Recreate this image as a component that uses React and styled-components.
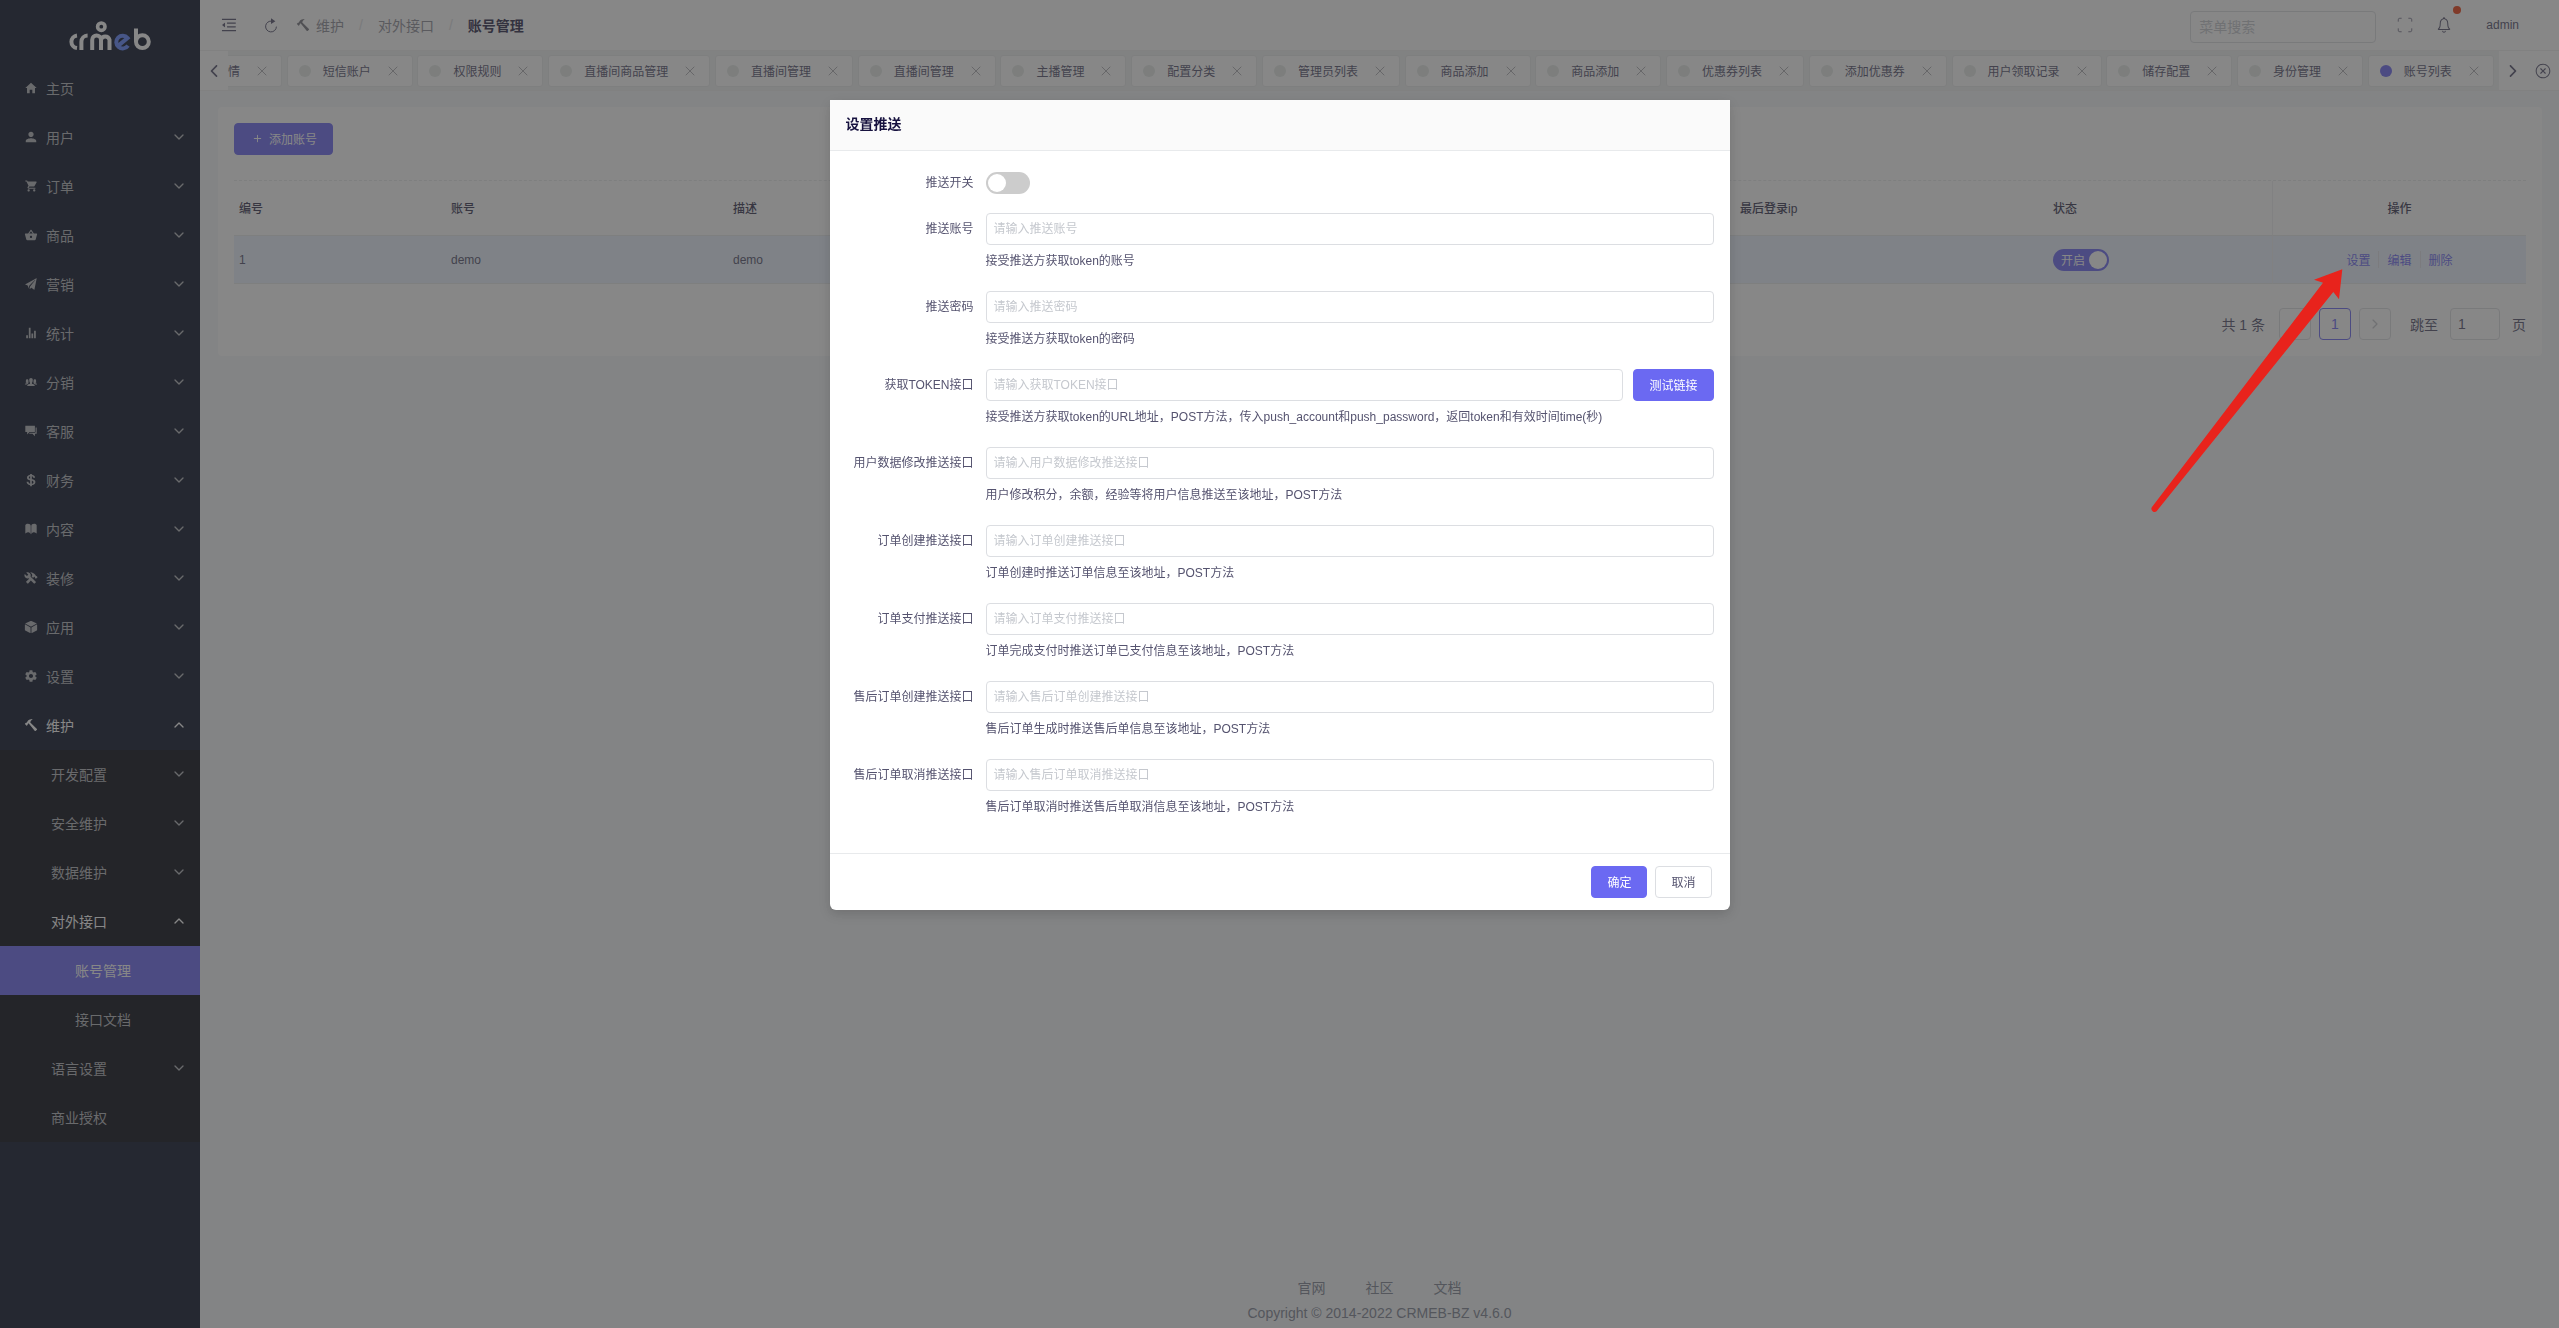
import { useState } from "react";
import styled, { createGlobalStyle } from "styled-components";
import {
    IoMdHome, IoMdPerson, IoMdCart, IoMdBasket, IoIosPaperPlane, IoMdStats, IoIosPeople,
    IoMdChatboxes, IoLogoUsd, IoIosBook, IoMdConstruct, IoMdCube, IoMdSettings, IoMdHammer,
    IoIosArrowBack, IoIosArrowForward, IoIosCloseCircleOutline, IoIosNotificationsOutline, IoIosAdd
} from "react-icons/io";
import { AiOutlineMenuFold } from "react-icons/ai";
import { ChevronDown, ChevronUp, Scan, X } from "lucide-react";

const GlobalStyle = createGlobalStyle`
    * {
        box-sizing: border-box;
    }
    body {
        margin: 0;
        background: #f5f7f9;
    }
    body, button, input {
        font-family: "Liberation Sans", "Noto Sans CJK SC", sans-serif;
        font-size: 12px;
        color: #55536f;
    }
    button {
        cursor: pointer;
    }
    a {
        text-decoration: none;
        color: inherit;
    }
`;

const purple = "#6b69f2";

/* ---------- sidebar ---------- */

const Layout = styled.div`
    display: flex;
    min-height: 100vh;
`;

const Sidebar = styled.aside`
    flex: 0 0 200px;
    background: #0a1228;
`;

const LogoBox = styled.div`
    display: flex;
    align-items: center;
    height: 64px;
    padding: 8px 0 0 68px;
`;

const MenuItem = styled.a`
    display: flex;
    align-items: center;
    height: 49px;
    padding: 0 13px 2px ${(p) => (p.$level === 3 ? 75 : p.$level === 2 ? 51 : 24)}px;
    font-size: 14px;
    color: ${(p) => (p.$open || p.$active ? "#fff" : "#b4b6bc")};
    background: ${(p) => (p.$active ? purple : "transparent")};

    span {
        flex: 1;
    }
`;

const MenuIcon = styled.i`
    display: flex;
    width: 22px;
    font-size: 14px;
`;

const SubMenu = styled.div`
    background: #090b15;
`;

/* ---------- header ---------- */

const Main = styled.div`
    flex: 1;
    min-width: 0;
    display: flex;
    flex-direction: column;
`;

const Header = styled.header`
    display: flex;
    align-items: center;
    height: 50px;
    padding: 0 40px 0 20px;
    background: #fff;
`;

const IconButton = styled.button`
    display: flex;
    align-items: center;
    justify-content: center;
    border: 0;
    padding: 0;
    background: none;
    width: ${(p) => p.$width || 18}px;
    font-size: ${(p) => p.$size || 18}px;
    color: #55536f;
`;

const Breadcrumb = styled.nav`
    display: flex;
    align-items: center;
    flex: 1;
    font-size: 14px;
    color: #8f8f99;

    svg {
        margin-right: 6px;
        color: #77777f;
    }
    i {
        margin: 0 15px;
        font-style: normal;
        color: #dcdee2;
    }
    b {
        color: #2f2b4c;
    }
`;

const HeaderLeft = styled.div`
    display: flex;
    align-items: center;
    gap: 24px;
    margin-right: 16px;
`;

const HeaderRight = styled.div`
    display: flex;
    align-items: center;
    gap: 20px;
`;

const Search = styled.input`
    width: 186px;
    height: 32px;
    margin-top: 3px;
    padding: 0 8px;
    border: 1px solid #dcdee2;
    border-radius: 4px;
    font-size: 14px;
    background: #fff;

    &::placeholder {
        color: #c5c8ce;
    }
`;

const Bell = styled.div`
    position: relative;
    margin-right: 12px;

    &::after {
        content: "";
        position: absolute;
        top: -6px;
        right: -7px;
        width: 8px;
        height: 8px;
        border-radius: 50%;
        background: #ed4014;
    }
`;

/* ---------- opened pages ---------- */

const TabBar = styled.div`
    display: flex;
    height: 41px;
    border-top: 1px solid #f0f0f0;
    border-bottom: 1px solid #f0f0f0;
    background: #fff;
`;

const TabList = styled.div`
    flex: 1;
    min-width: 0;
    display: flex;
    justify-content: space-between;
    align-items: center;
    padding-right: 5px;
    overflow: hidden;
    background: #f0f2f2;
`;

const Tab = styled.div`
    flex: none;
    display: flex;
    align-items: center;
    height: 32px;
    padding: 0 11px;
    border: 1px solid #e8eaec;
    border-radius: 3px;
    background: #fff;

    &::before {
        content: "";
        width: 12px;
        height: 12px;
        margin-right: 12px;
        border-radius: 50%;
        background: ${(p) => (p.$active ? purple : "#e5e9e7")};
    }
    /* scrolled half out of view */
    &:first-child {
        padding-left: 0;
        border-left: 0;
        border-radius: 0 3px 3px 0;
    }
    &:first-child::before {
        display: none;
    }
    button {
        margin-left: 14px;
        color: #85858d;
    }
    svg {
        flex: none;
    }
`;

const tabs = ["情", "短信账户", "权限规则", "直播间商品管理", "直播间管理", "直播间管理", "主播管理", "配置分类",
    "管理员列表", "商品添加", "商品添加", "优惠券列表", "添加优惠券", "用户领取记录", "储存配置", "身份管理", "账号列表"];

/* ---------- content ---------- */

const Card = styled.section`
    margin: 16px 17px 16px 18px;
    padding: 16px;
    border-radius: 4px;
    background: #fff;
`;

const Button = styled.button`
    display: inline-flex;
    align-items: center;
    justify-content: center;
    height: 32px;
    padding: 0 15px 2px;
    border: 1px solid ${(p) => (p.$primary ? purple : "#dcdee2")};
    border-radius: 4px;
    color: ${(p) => (p.$primary ? "#fff" : "#55536f")};
    background: ${(p) => (p.$primary ? purple : "#fff")};

    svg {
        margin-right: 4px;
        font-size: 15px;
    }
`;

const Table = styled.table`
    width: 100%;
    margin-top: 25px;
    border-top: 1px dashed #e8eaec;
    border-collapse: separate;
    border-spacing: 0;
    table-layout: fixed;

    th, td {
        padding: 0 5px;
        text-align: left;
        border-bottom: 1px solid #e8eaec;
    }
    th {
        height: 55px;
        padding-bottom: 2px;
        font-weight: 500;
        color: #3a3754;
    }
    td {
        height: 48px;
        background: #ebf3ff;
    }
    th:last-child, td:last-child {
        text-align: center;
        border-left: 1px solid #efeff2;
    }
`;

const Actions = styled.div`
    display: flex;
    justify-content: center;
    color: ${purple};

    a + a {
        margin-left: 8px;
        padding-left: 8px;
        border-left: 1px solid #e0e2e8;
    }
`;

const Track = styled.label`
    display: inline-flex;
    align-items: center;
    justify-content: space-between;
    flex-direction: ${(p) => (p.$on ? "row" : "row-reverse")};
    vertical-align: middle;
    width: ${(p) => (p.$wide ? 56 : 44)}px;
    height: 22px;
    padding: 0 2px;
    border-radius: 11px;
    color: #fff;
    background: ${(p) => (p.$on ? purple : "#ccc")};

    span {
        padding-left: 6px;
    }
    input {
        appearance: none;
        width: 18px;
        height: 18px;
        margin: 0;
        border-radius: 50%;
        background: #fff;
    }
`;

const Pager = styled.div`
    display: flex;
    align-items: center;
    justify-content: flex-end;
    gap: 8px;
    margin-top: 24px;
    font-size: 14px;

    label {
        display: flex;
        align-items: center;
        gap: 12px;
        margin-left: 11px;
    }
    input {
        width: 50px;
        height: 32px;
        padding: 0 7px;
        border: 1px solid #dcdee2;
        border-radius: 4px;
        font-size: 14px;
    }
`;

const Total = styled.span`
    margin-right: 6px;
`;

const PageButton = styled.button`
    display: flex;
    align-items: center;
    justify-content: center;
    width: 32px;
    height: 32px;
    padding: 0;
    border: 1px solid ${(p) => (p.$active ? purple : "#dcdee2")};
    border-radius: 4px;
    font-size: 14px;
    color: ${(p) => (p.$active ? purple : "#c5c8ce")};
    background: #fff;
`;

const Footer = styled.footer`
    margin-top: auto;
    padding-bottom: 4px;
    font-size: 14px;
    line-height: 22px;
    text-align: center;
    color: #808695;

    nav {
        display: flex;
        justify-content: center;
        gap: 40px;
        margin-bottom: 3px;
    }
`;

/* ---------- modal ---------- */

const Mask = styled.div`
    position: fixed;
    inset: 0;
    display: flex;
    justify-content: center;
    align-items: flex-start;
    padding-top: 100px;
    background: rgba(55, 55, 55, 0.6);
`;

const Modal = styled.form`
    width: 900px;
    border-radius: 6px;
    background: #fff;
    box-shadow: 0 4px 12px rgba(0, 0, 0, 0.15);
`;

const ModalTitle = styled.h2`
    margin: 0;
    padding: 13px 16px 15px;
    border-bottom: 1px solid #e8eaec;
    font-size: 14px;
    line-height: 22px;
    color: #17123f;
    background: #fafafa;
`;

const ModalBody = styled.div`
    display: flex;
    flex-direction: column;
    gap: 14px;
    padding: 16px 16px 30px;
`;

const ModalFooter = styled.div`
    display: flex;
    justify-content: flex-end;
    gap: 8px;
    padding: 12px 18px;
    border-top: 1px solid #e8eaec;
`;

const FormItem = styled.div`
    display: grid;
    grid-template-columns: 128px 1fr;
    column-gap: 12px;
    line-height: 32px;

    > label {
        text-align: right;
        white-space: nowrap;
    }
    p {
        grid-column: 2;
        margin: 0;
    }
`;

const Control = styled.div`
    display: flex;
    align-items: center;
    gap: 10px;
    height: 32px;
`;

const TextInput = styled.input`
    flex: 1;
    height: 32px;
    padding: 0 7px;
    border: 1px solid #dcdee2;
    border-radius: 4px;

    &::placeholder {
        color: #c5c8ce;
    }
`;

const Pointer = styled.svg`
    position: fixed;
    top: 269px;
    right: 216px;
    pointer-events: none;
`;

const menus = [
    { name: "主页", icon: IoMdHome, leaf: true },
    { name: "用户", icon: IoMdPerson },
    { name: "订单", icon: IoMdCart },
    { name: "商品", icon: IoMdBasket },
    { name: "营销", icon: IoIosPaperPlane },
    { name: "统计", icon: IoMdStats },
    { name: "分销", icon: IoIosPeople },
    { name: "客服", icon: IoMdChatboxes },
    { name: "财务", icon: IoLogoUsd },
    { name: "内容", icon: IoIosBook },
    { name: "装修", icon: IoMdConstruct },
    { name: "应用", icon: IoMdCube },
    { name: "设置", icon: IoMdSettings },
    { name: "维护", icon: IoMdHammer, open: true }
];

const subMenus = [
    { name: "开发配置", level: 2 },
    { name: "安全维护", level: 2 },
    { name: "数据维护", level: 2 },
    { name: "对外接口", level: 2, open: true },
    { name: "账号管理", level: 3, leaf: true, active: true },
    { name: "接口文档", level: 3, leaf: true },
    { name: "语言设置", level: 2 },
    { name: "商业授权", level: 2, leaf: true }
];

const fields = [
    { id: "push_account", label: "推送账号", help: "接受推送方获取token的账号" },
    { id: "push_password", label: "推送密码", help: "接受推送方获取token的密码" },
    { id: "push_token_url", label: "获取TOKEN接口", test: true, help: "接受推送方获取token的URL地址，POST方法，传入push_account和push_password，返回token和有效时间time(秒)" },
    { id: "user_update_push", label: "用户数据修改推送接口", help: "用户修改积分，余额，经验等将用户信息推送至该地址，POST方法" },
    { id: "order_create_push", label: "订单创建推送接口", help: "订单创建时推送订单信息至该地址，POST方法" },
    { id: "order_pay_push", label: "订单支付推送接口", help: "订单完成支付时推送订单已支付信息至该地址，POST方法" },
    { id: "refund_create_push", label: "售后订单创建推送接口", help: "售后订单生成时推送售后单信息至该地址，POST方法" },
    { id: "refund_cancel_push", label: "售后订单取消推送接口", help: "售后订单取消时推送售后单取消信息至该地址，POST方法" }
];

const Logo = () => (
    <svg width="83" height="30" viewBox="0 0 83 30" fill="none" stroke="#fff" strokeWidth="4">
        <path d="M9 14.4A6.4 6.4 0 0 0 9 27.1" />
        <path d="M13.4 29V20.7A6.3 6.3 0 0 1 19.6 14.4" />
        <path d="M24.2 29V18.8a4.4 4.4 0 0 1 8.8 0V29M33 18.8a4.4 4.4 0 0 1 8.5 0V29" />
        <circle cx="33.3" cy="5.7" r="3.7" strokeWidth="3.6" />
        <path d="M50.6 24.4L59.6 17A6.4 6.4 0 1 0 60 24.6" stroke="#5f84ff" />
        <path d="M68 7.5V20.7" />
        <circle cx="74.4" cy="20.7" r="6.4" />
    </svg>
);

const ReloadIcon = () => (
    <svg width="14" height="16" viewBox="0 0 14 16" fill="none" stroke="currentColor">
        <path d="M8 4.2A5.4 5.4 0 1 0 12.4 9.6" />
        <path d="M7 1.2L11.4 4.2L7 7Z" fill="currentColor" stroke="none" />
    </svg>
);

const MenuRow = ({ item }) => {
    const Icon = item.icon;
    return (
        <MenuItem href="#" $level={item.level} $open={item.open} $active={item.active}>
            {Icon && <MenuIcon><Icon /></MenuIcon>}
            <span>{item.name}</span>
            {!item.leaf && (item.open ? <ChevronUp size={16} /> : <ChevronDown size={16} />)}
        </MenuItem>
    );
};

const App = () => {
    const [isPush, setPush] = useState(false);
    const [isEnabled, setEnabled] = useState(true);

    return (
        <>
            <GlobalStyle />
            <Layout>
                <Sidebar>
                    <LogoBox><Logo /></LogoBox>
                    {menus.map((m) => <MenuRow key={m.name} item={m} />)}
                    <SubMenu>
                        {subMenus.map((m) => <MenuRow key={m.name} item={m} />)}
                    </SubMenu>
                </Sidebar>

                <Main>
                    <Header>
                        <HeaderLeft>
                            <IconButton aria-label="收起菜单"><AiOutlineMenuFold /></IconButton>
                            <IconButton aria-label="刷新"><ReloadIcon /></IconButton>
                        </HeaderLeft>
                        <Breadcrumb>
                            <IoMdHammer />
                            维护<i>/</i>对外接口<i>/</i><b>账号管理</b>
                        </Breadcrumb>
                        <HeaderRight>
                            <Search placeholder="菜单搜索" aria-label="菜单搜索" />
                            <IconButton aria-label="全屏"><Scan size={22} strokeWidth={1} /></IconButton>
                            <Bell>
                                <IconButton $size={26} $width={20} aria-label="消息"><IoIosNotificationsOutline /></IconButton>
                            </Bell>
                            <span>admin</span>
                        </HeaderRight>
                    </Header>

                    <TabBar>
                        <IconButton $width={28} aria-label="向左"><IoIosArrowBack /></IconButton>
                        <TabList>
                            {tabs.map((name, i) => (
                                <Tab key={i} $active={i === tabs.length - 1}>
                                    {name}
                                    <IconButton $width={16} aria-label={"关闭" + name}><X size={16} strokeWidth={1} /></IconButton>
                                </Tab>
                            ))}
                        </TabList>
                        <IconButton $width={28} aria-label="向右"><IoIosArrowForward /></IconButton>
                        <IconButton $width={32} aria-label="关闭全部"><IoIosCloseCircleOutline /></IconButton>
                    </TabBar>

                    <Card>
                        <Button $primary><IoIosAdd />添加账号</Button>
                        <Table>
                            <colgroup>
                                <col width="212" />
                                <col width="282" />
                                <col />
                                <col width="313" />
                                <col width="224" />
                                <col width="254" />
                            </colgroup>
                            <thead>
                                <tr>
                                    <th>编号</th>
                                    <th>账号</th>
                                    <th>描述</th>
                                    <th>最后登录ip</th>
                                    <th>状态</th>
                                    <th>操作</th>
                                </tr>
                            </thead>
                            <tbody>
                                <tr>
                                    <td>1</td>
                                    <td>demo</td>
                                    <td>demo</td>
                                    <td></td>
                                    <td>
                                        <Track $wide $on={isEnabled}>
                                            <span>{isEnabled ? "开启" : "关闭"}</span>
                                            <input type="checkbox" checked={isEnabled} onChange={() => setEnabled(!isEnabled)} />
                                        </Track>
                                    </td>
                                    <td>
                                        <Actions>
                                            <a href="#">设置</a>
                                            <a href="#">编辑</a>
                                            <a href="#">删除</a>
                                        </Actions>
                                    </td>
                                </tr>
                            </tbody>
                        </Table>
                        <Pager>
                            <Total>共 1 条</Total>
                            <PageButton aria-label="上一页"><IoIosArrowBack /></PageButton>
                            <PageButton $active>1</PageButton>
                            <PageButton aria-label="下一页"><IoIosArrowForward /></PageButton>
                            <label>跳至<input defaultValue="1" />页</label>
                        </Pager>
                    </Card>

                    <Footer>
                        <nav>
                            <a href="#">官网</a>
                            <a href="#">社区</a>
                            <a href="#">文档</a>
                        </nav>
                        Copyright © 2014-2022 CRMEB-BZ v4.6.0
                    </Footer>
                </Main>
            </Layout>

            <Mask>
                <Modal role="dialog" aria-labelledby="push-title" onSubmit={(e) => e.preventDefault()}>
                    <ModalTitle id="push-title">设置推送</ModalTitle>
                    <ModalBody>
                        <FormItem>
                            <label htmlFor="push_open">推送开关</label>
                            <Control>
                                <Track $on={isPush}>
                                    <span />
                                    <input id="push_open" type="checkbox" checked={isPush} onChange={() => setPush(!isPush)} />
                                </Track>
                            </Control>
                        </FormItem>
                        {fields.map((f) => (
                            <FormItem key={f.id}>
                                <label htmlFor={f.id}>{f.label}</label>
                                <Control>
                                    <TextInput id={f.id} placeholder={"请输入" + f.label} />
                                    {f.test && <Button type="button" $primary>测试链接</Button>}
                                </Control>
                                <p>{f.help}</p>
                            </FormItem>
                        ))}
                    </ModalBody>
                    <ModalFooter>
                        <Button type="submit" $primary>确定</Button>
                        <Button type="button">取消</Button>
                    </ModalFooter>
                </Modal>
            </Mask>

            {/* arrow to the 设置 link */}
            <Pointer width="192" height="244" viewBox="0 0 192 244" fill="#e8231c">
                <path d="M191.3 .3L163 10.7L172 13.7L.8 238.2A3.2 3.2 0 0 0 5.6 242.2L182.3 23L188 30.3Z" />
            </Pointer>
        </>
    );
};

export default App;
